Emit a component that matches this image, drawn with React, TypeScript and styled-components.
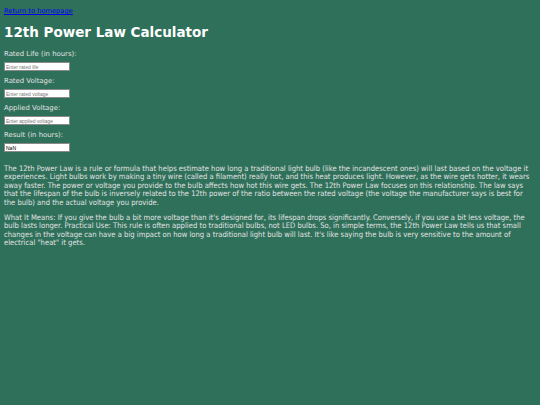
import React, { useState } from 'react';
import styled, { createGlobalStyle } from 'styled-components';

const GlobalStyle = createGlobalStyle`
  html, body {
    margin: 0;
    padding: 0;
  }
  body {
    background-color: #2f705a;
    font-family: "DejaVu Sans", Verdana, sans-serif;
    font-size: 7.4px;
    color: #e2e2e2;
  }
`;

const Page = styled.div`
  padding: 7px 4px 4px;
`;

const HomeLink = styled.a`
  display: block;
  width: max-content;
  color: #0000ee;
  text-decoration: underline;
  font-size: 6.7px;
  line-height: 8px;
`;

const Title = styled.h1`
  font-size: 13.5px;
  line-height: 16px;
  font-weight: bold;
  color: #ffffff;
  margin: 9px 0 9.5px;
`;

const Form = styled.div`
  display: flex;
  flex-direction: column;
  gap: 5.5px;
`;

const Field = styled.div`
  display: flex;
  flex-direction: column;
  align-items: flex-start;
  gap: 4.5px;
`;

const Label = styled.label`
  font-size: 6.9px;
  line-height: 8px;
  color: #e2e2e2;
`;

const Input = styled.input`
  width: 66px;
  height: 9px;
  box-sizing: border-box;
  margin: 0;
  padding: 0 1px;
  border: 1px solid #8a8a8a;
  background: #fff;
  font-family: "Liberation Sans", Arial, sans-serif;
  font-size: 5px;
  color: #000;

  &::placeholder {
    color: #777;
  }
`;

const Body = styled.div`
  margin-top: 13px;
`;

const Text = styled.p`
  font-family: "DejaVu Sans Condensed", "DejaVu Sans", Verdana, sans-serif;
  font-stretch: condensed;
  font-size: 7.6px;
  line-height: 8.4px;
  margin: 0 0 7px;
  color: #e2e2e2;
`;

export default function App() {
  const [life, setLife] = useState('');
  const [rated, setRated] = useState('');
  const [applied, setApplied] = useState('');
  const result = String(
    parseFloat(life) * Math.pow(parseFloat(rated) / parseFloat(applied), 12)
  );

  return (
    <Page>
      <GlobalStyle />
      <HomeLink href="#">Return to homepage</HomeLink>
      <Title>12th Power Law Calculator</Title>
      <Form>
        <Field>
          <Label>Rated Life (in hours):</Label>
          <Input placeholder="Enter rated life" value={life} onChange={(e) => setLife(e.target.value)} />
        </Field>
        <Field>
          <Label>Rated Voltage:</Label>
          <Input placeholder="Enter rated voltage" value={rated} onChange={(e) => setRated(e.target.value)} />
        </Field>
        <Field>
          <Label>Applied Voltage:</Label>
          <Input placeholder="Enter applied voltage" value={applied} onChange={(e) => setApplied(e.target.value)} />
        </Field>
        <Field>
          <Label>Result (in hours):</Label>
          <Input readOnly value={result} />
        </Field>
      </Form>
      <Body>
        <Text>
          The 12th Power Law is a rule or formula that helps estimate how long a traditional light bulb (like the
          incandescent ones) will last based on the voltage it experiences. Light bulbs work by making a tiny wire
          (called a filament) really hot, and this heat produces light. However, as the wire gets hotter, it wears
          away faster. The power or voltage you provide to the bulb affects how hot this wire gets. The 12th Power Law
          focuses on this relationship. The law says that the lifespan of the bulb is inversely related to the 12th
          power of the ratio between the rated voltage (the voltage the manufacturer says is best for the bulb) and
          the actual voltage you provide.
        </Text>
        <Text>
          What It Means: If you give the bulb a bit more voltage than it's designed for, its lifespan drops
          significantly. Conversely, if you use a bit less voltage, the bulb lasts longer. Practical Use: This rule is
          often applied to traditional bulbs, not LED bulbs. So, in simple terms, the 12th Power Law tells us that
          small changes in the voltage can have a big impact on how long a traditional light bulb will last. It's like
          saying the bulb is very sensitive to the amount of electrical "heat" it gets.
        </Text>
      </Body>
    </Page>
  );
}
